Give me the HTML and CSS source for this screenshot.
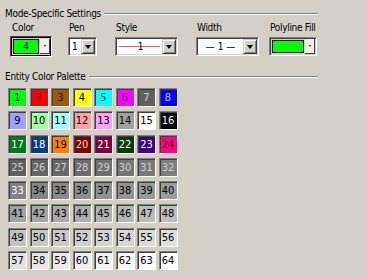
FILE: index.html
```html
<!DOCTYPE html>
<html lang="en">
<head>
    <meta charset="UTF-8">
    <title>Mode-Specific Settings</title>
    <link rel="stylesheet" href="styles.css">
</head>
<body>
    <div class="panel">
        <div class="group-title">Mode-Specific Settings</div>

        <div class="settings">
            <div class="field f-color">
                <div class="label">Color</div>
                <div class="combo combo-swatch focused">
                    <div class="swatch">4</div>
                    <div class="mini-btn"><span class="mini-arrow"></span></div>
                </div>
            </div>
            <div class="field f-pen">
                <div class="label">Pen</div>
                <div class="combo">
                    <div class="value">1</div>
                    <div class="btn"><span class="arrow"></span></div>
                </div>
            </div>
            <div class="field f-style">
                <div class="label">Style</div>
                <div class="combo">
                    <div class="value line-value"><span>1</span></div>
                    <div class="btn"><span class="arrow"></span></div>
                </div>
            </div>
            <div class="field f-width">
                <div class="label">Width</div>
                <div class="combo">
                    <div class="value center">— 1 —</div>
                    <div class="btn"><span class="arrow"></span></div>
                </div>
            </div>
            <div class="field f-fill">
                <div class="label">Polyline Fill</div>
                <div class="combo combo-swatch">
                    <div class="swatch"></div>
                    <div class="mini-btn"><span class="mini-arrow"></span></div>
                </div>
            </div>
        </div>

        <div class="group-title palette-title">Entity Color Palette</div>
        <div class="palette" id="palette"></div>
    </div>

    <script>
        // цвета палитры: [фон, цвет цифры]
        var colors = [
            ['#00ff00', '#000'], ['#ff0000', '#600000'], ['#9c5a0c', '#301800'], ['#ffff00', '#000'],
            ['#00ffff', '#003838'], ['#ff00ff', '#500050'], ['#606060', '#d0d0d0'], ['#0000ff', '#c8c8ff'],
            ['#a0a0ff', '#000'], ['#a0ffa0', '#000'], ['#a0ffff', '#000'], ['#ffa0a0', '#000'],
            ['#ffa0ff', '#000'], ['#a0a0a0', '#000'], ['#ffffff', '#000'], ['#000000', '#fff'],
            ['#007a1c', '#fff'], ['#0a3c7c', '#fff'], ['#ff8000', '#000'], ['#800000', '#ffd8d8'],
            ['#800040', '#fff'], ['#004000', '#fff'], ['#400080', '#fff'], ['#ff0080', '#600000']
        ];

        var palette = document.getElementById('palette');
        for (var n = 1; n <= 64; n++) {
            var bg, fg;
            if (n <= 24) {
                bg = colors[n - 1][0];
                fg = colors[n - 1][1];
            } else {
                var v = Math.round(96 + (n - 25) * 159 / 39);
                bg = 'rgb(' + v + ',' + v + ',' + v + ')';
                fg = n < 33 ? '#d0d0d0' : (n == 33 ? '#fff' : '#000');
            }
            var cell = document.createElement('div');
            cell.className = 'cell';
            cell.style.background = bg;
            cell.style.color = fg;
            cell.textContent = n;
            palette.appendChild(cell);
        }
    </script>
</body>
</html>
```

FILE: styles.css
```css
body {
    margin: 0;
    background-color: #d4d0c8;
    font-family: "DejaVu Sans Condensed", "DejaVu Sans", sans-serif;
    font-stretch: condensed;
    font-size: 10px;
    color: #000;
}

.panel {
    width: 318px;
    padding-top: 8px;
}

/* заголовок группы с линией */
.group-title {
    display: flex;
    align-items: center;
    height: 12px;
    line-height: 12px;
    padding-left: 5px;
    letter-spacing: -0.3px;
    white-space: nowrap;
}

.group-title::after {
    content: '';
    flex: 1;
    margin-left: 3px;
    border-top: 1px solid #808080;
    border-bottom: 1px solid #ffffff;
}

.palette-title {
    margin-top: 14px;
}

/* строка с выпадающими списками */
.settings {
    display: flex;
    padding-left: 10px;
    margin-top: 2px;
}

.field {
    display: flex;
    flex-direction: column;
}

.label {
    height: 12px;
    line-height: 12px;
    padding-left: 1px;
    margin-bottom: 2px;
    letter-spacing: -0.3px;
    white-space: nowrap;
}

.f-color { width: 42px; }
.f-color .label { padding-left: 2px; }
.f-pen { width: 29px; margin-left: 16px; }
.f-style { width: 63px; margin-left: 18px; }
.f-width { width: 63px; margin-left: 18px; }
.f-fill { width: 48px; margin-left: 10px; }

.combo {
    display: flex;
    box-sizing: border-box;
    height: 19px;
    margin-top: 1px;
    padding: 1px;
    background-color: #fff;
    border: 1px solid;
    border-color: #808080 #fff #fff #808080;
    box-shadow: inset 1px 1px #404040, inset -1px -1px #d4d0c8;
}

.combo .value {
    flex: 1;
    padding-left: 2px;
    line-height: 15px;
}

.combo .value.center {
    padding-left: 0;
    text-align: center;
}

.line-value {
    display: flex;
    justify-content: center;
    margin: 0 2px 0 2px;
    background: linear-gradient(#f05a5a, #f05a5a) center / 100% 1px no-repeat;
}

.line-value span {
    padding-left: 0;
}

.btn {
    display: flex;
    align-items: center;
    justify-content: center;
    box-sizing: border-box;
    width: 14px;
    background-color: #d4d0c8;
    border: 1px solid;
    border-color: #d4d0c8 #404040 #404040 #d4d0c8;
    box-shadow: inset 1px 1px #fff, inset -1px -1px #808080;
}

.arrow {
    width: 0;
    height: 0;
    border-left: 3.5px solid transparent;
    border-right: 3.5px solid transparent;
    border-top: 4px solid #000;
}

/* список с образцом цвета */
.combo-swatch {
    background-color: #d4d0c8;
}

.combo-swatch.focused {
    height: 21px;
    margin-top: 0;
    border-color: #404040 #fff #fff #404040;
    box-shadow: inset 0 0 0 1px #000;
    padding: 2px 1px 2px 2px;
}

.swatch {
    flex: 1;
    background-color: #00ff00;
    border: 1px solid #000;
    text-align: center;
    line-height: 13px;
}

.combo-swatch:not(.focused) .swatch {
    margin: 1px 0 1px 1px;
}

.mini-btn {
    display: flex;
    align-items: center;
    justify-content: center;
    width: 9px;
    margin-left: 1px;
    background-color: #f0efea;
    border-right: 1px solid #404040;
    border-bottom: 1px solid #404040;
}

.mini-arrow {
    width: 0;
    height: 0;
    border-left: 1.5px solid transparent;
    border-right: 1.5px solid transparent;
    border-top: 2px solid #000;
}

/* палитра */
.palette {
    display: grid;
    grid-template-columns: repeat(8, 19px);
    grid-auto-rows: 19px;
    column-gap: 2.5px;
    row-gap: 4.3px;
    margin-top: 5px;
    padding-left: 8px;
}

.cell {
    box-sizing: border-box;
    border: 1px solid;
    border-color: #808080 #fff #fff #808080;
    box-shadow: inset 1px 1px #404040;
    font-size: 11px;
    line-height: 17px;
    text-align: center;
}
```
